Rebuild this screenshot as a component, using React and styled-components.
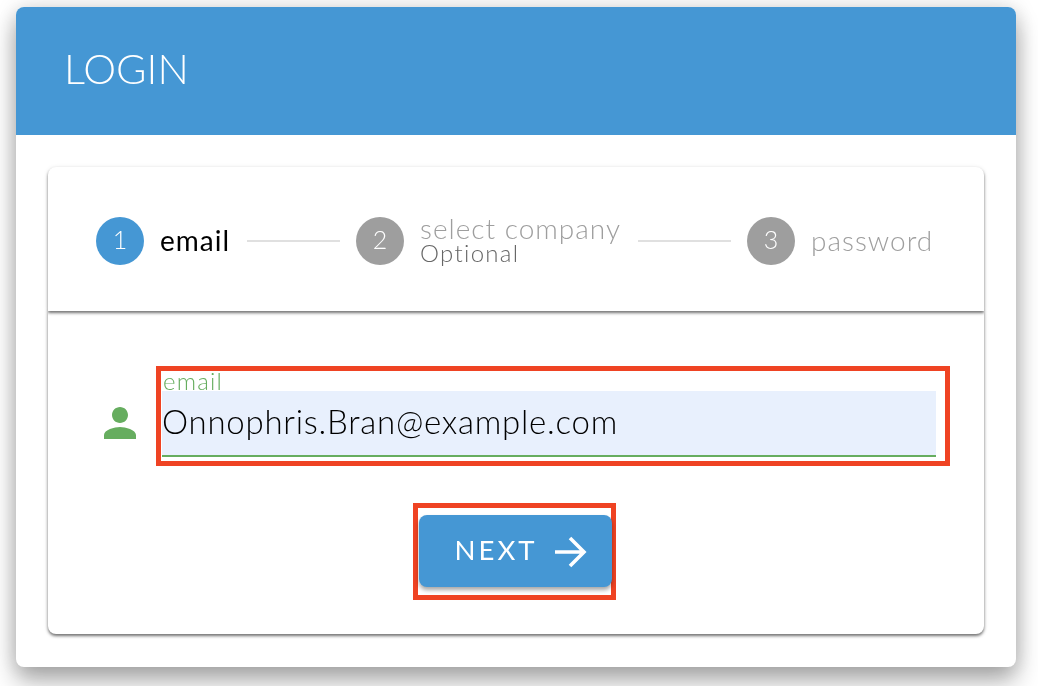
import React from 'react';
import styled, { createGlobalStyle } from 'styled-components';

const Global = createGlobalStyle`
  html, body { margin: 0; padding: 0; background: #fff; }
  body { font-family: "Lato", "Open Sans", sans-serif; overflow: hidden; }
`;
const Page = styled.div`
  width: 1038px; height: 686px; box-sizing: border-box; padding: 7px 22px 19px 16px; overflow: hidden; will-change: transform;
`;
const Shell = styled.div`
  width: 1000px; height: 660px; border-radius: 8px; background: #fff;
  box-shadow: 0 14px 24px rgba(0,0,0,.32), 0 0 22px rgba(0,0,0,.14);
`;
const Header = styled.header`
  height: 128px; box-sizing: border-box; background: #4597d4; border-radius: 8px 8px 0 0; display: flex; align-items: center; padding: 0 0 5px 48px;
`;
const Title = styled.h1`
  margin: 0; font-size: 41.5px; font-weight: 300; color: #fff; line-height: 1;
`;
const Content = styled.div`
  padding: 32px; display: flex; flex-direction: column;
`;
const StepCard = styled.section`
  height: 144px; box-sizing: border-box; background: #fff; border-radius: 8px 8px 0 0; display: flex; align-items: center; padding: 4px 48px 0; position: relative; z-index: 1;
  box-shadow: 0 2px 3px rgba(0,0,0,.5), 0 1px 5px rgba(0,0,0,.12);
`;
const Step = styled.div`
  display: flex; align-items: center; gap: 16px;
`;
const Circle = styled.div`
  width: 48px; height: 48px; border-radius: 50%; display: flex; align-items: center; justify-content: center; flex: none;
  background: ${p => (p.$active ? '#4597d4' : '#9e9e9e')}; color: #fff; font-size: 25px; font-weight: 300; padding-bottom: 4px; box-sizing: border-box;
`;
const LabelStack = styled.div`
  display: flex; flex-direction: column; padding-bottom: 3px;
`;
const StepLabel = styled.span`
  font-size: 28px; font-weight: ${p => (p.$active ? 400 : 300)}; line-height: ${p => (p.$tight ? '26px' : '30px')};
  color: ${p => (p.$active ? '#000' : '#9e9e9e')}; letter-spacing: 1px; white-space: nowrap;
`;
const Optional = styled.span`
  font-size: 24px; font-weight: 300; line-height: 24px; color: #666; letter-spacing: 1.3px;
`;
const Connector = styled.div`
  width: 93px; height: 2px; background: #e0e0e0; margin: 0 16px 0 17px; flex: none;
`;
const FormCard = styled.section`
  height: 323px; background: #fff; border-radius: 0 0 8px 8px; box-sizing: border-box; padding-top: 55px;
  box-shadow: 0 2px 3px rgba(0,0,0,.5), 0 1px 5px rgba(0,0,0,.12);
`;
const FieldRow = styled.div`
  display: flex; align-items: center; padding-left: 48px;
`;
const PersonIcon = styled.svg`
  width: 48px; height: 48px; fill: #66ad5f; flex: none; margin: 14px 12px 0 0;
`;
const Frame = styled.div`
  border: 5px solid #ef4323; box-sizing: border-box;
`;
const FieldFrame = styled(Frame)`
  width: 794px; height: 100px; padding: 0 9px 0 1px; display: flex; flex-direction: column;
`;
const FieldLabel = styled.label`
  height: 20px; font-size: 24px; line-height: 20px; font-weight: 300; color: #66ad5f; display: block; padding-left: 1px; letter-spacing: 1.2px;
`;
const Input = styled.input`
  height: 60px; width: 100%; box-sizing: content-box; border: 0; padding: 0 0 4px; margin: 0; outline: 0; display: block;
  border-bottom: 2px solid #66ad5f; background: #e8f0fd; font-family: inherit; font-size: 33px; font-weight: 300; color: #000; letter-spacing: .75px;
`;
const ButtonRow = styled.div`
  display: flex; justify-content: center; margin-top: 37px; padding-left: 61px; padding-right: 65px;
`;
const ButtonFrame = styled(Frame)`
  width: 203px; height: 97px; padding: 7px 0 0 1px;
`;
const NextButton = styled.button`
  width: 193px; height: 72px; box-sizing: border-box; border: 0; border-radius: 8px; background: #4597d4; color: #fff; display: flex; align-items: center; justify-content: center; gap: 15px;
  font-family: inherit; font-size: 27.5px; font-weight: 400; letter-spacing: 3px; padding: 0 0 4px 13px;
  box-shadow: 0 3px 4px rgba(0,0,0,.35);
`;
const ArrowIcon = styled.svg`
  width: 36px; height: 36px; fill: none; stroke: #fff; stroke-width: 3.6; margin-top: 6px; flex: none;
`;

const steps = [
  { n: 1, label: 'email', active: true },
  { n: 2, label: 'select company', optional: 'Optional' },
  { n: 3, label: 'password' },
];

export default function App() {
  return (
    <Page>
      <Global />
      <Shell>
        <Header><Title>LOGIN</Title></Header>
        <Content>
          <StepCard>
            {steps.map((s, i) => (
              <React.Fragment key={s.n}>
                {i > 0 && <Connector />}
                <Step>
                  <Circle $active={s.active}>{s.n}</Circle>
                  <LabelStack>
                    <StepLabel $active={s.active} $tight={!!s.optional}>{s.label}</StepLabel>
                    {s.optional && <Optional>{s.optional}</Optional>}
                  </LabelStack>
                </Step>
              </React.Fragment>
            ))}
          </StepCard>
          <FormCard>
            <FieldRow>
              <PersonIcon viewBox="0 0 24 24">
                <path d="M12 12c2.21 0 4-1.79 4-4s-1.79-4-4-4-4 1.79-4 4 1.79 4 4 4zm0 2c-2.67 0-8 1.34-8 4v2h16v-2c0-2.66-5.33-4-8-4z" />
              </PersonIcon>
              <FieldFrame>
                <FieldLabel htmlFor="email">email</FieldLabel>
                <Input id="email" readOnly value="Onnophris.Bran@example.com" />
              </FieldFrame>
            </FieldRow>
            <ButtonRow>
              <ButtonFrame>
                <NextButton>
                  NEXT
                  <ArrowIcon viewBox="0 0 36 36">
                    <path d="M3 18h29M18 4l14 14-14 14" />
                  </ArrowIcon>
                </NextButton>
              </ButtonFrame>
            </ButtonRow>
          </FormCard>
        </Content>
      </Shell>
    </Page>
  );
}
